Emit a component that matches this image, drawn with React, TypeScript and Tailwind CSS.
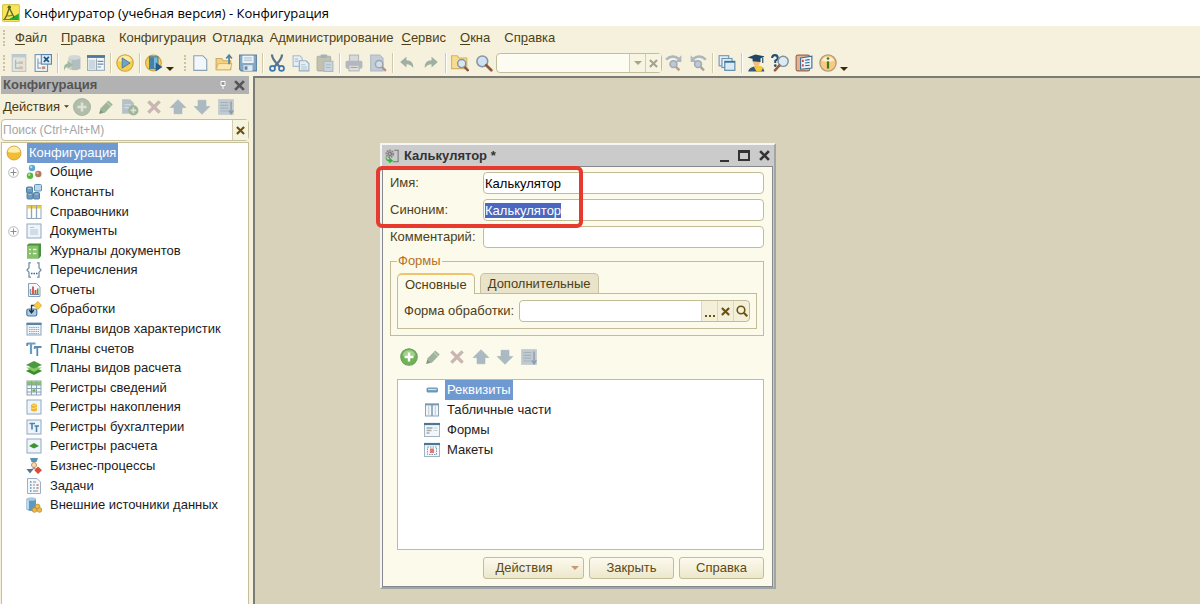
import { useEffect, useRef, useState } from "react";
import type { ReactNode } from "react";

const glass = (
  <>
    <circle cx="6.5" cy="6.5" r="4.8" fill="#cfe2f3" stroke="#8795a6" strokeWidth="1.4" />
    <path d="M10 10l4.5 4.5" stroke="#8b5a3c" strokeWidth="2.4" strokeLinecap="round" />
  </>
);

const page = <path d="M2.5 1.5h8l3.500 3.500v9.500h-11.500z" fill="#f2f7fb" stroke="#8aa0b5" />;

const frame = <rect x="1" y="1" width="14" height="14" fill="#eef4f9" stroke="#8fa9bf" />;

const icons: Record<string, ReactNode> = {
  logo: (
    <>
      <rect x="0.500" y="0.500" width="15" height="15" rx="1" fill="#f8e45c" stroke="#dcc64c" />
      <path d="M6 13.500l9-5v5z" fill="#1fae35" />
      <path d="M6.500 3.500L4 10.500l-2 3.500M6.500 3.500l4.500 9" fill="none" stroke="#55651a" strokeWidth="1.200" />
      <path d="M3.500 10q3 1.500 6-.5M1 13.800h14" fill="none" stroke="#6f8020" />
      <circle cx="6.500" cy="2.800" r="1.500" fill="#55651a" />
    </>
  ),
  tree: (
    <g opacity="0.55">
      <rect x="2" y="0.500" width="12" height="15" fill="#d3dbe1" stroke="#91a5b8" />
      <rect x="2" y="0.500" width="12" height="2.500" fill="#8ea9c1" />
      <path d="M5 5v7.500h3M5 8h3" fill="none" stroke="#6d8296" />
      <rect x="8" y="6.500" width="3.500" height="2.500" fill="#c98f79" />
      <rect x="8" y="11" width="3.500" height="2.500" fill="#c98f79" />
    </g>
  ),
  treeClose: (
    <>
      <rect x="1" y="0.500" width="11" height="15" fill="#f2f7fb" stroke="#7c97b0" />
      <path d="M3.500 4v8.500h3M3.500 8h3" fill="none" stroke="#8b9cac" />
      <rect x="7" y="11" width="3" height="2.500" fill="#c98f79" />
      <rect x="6.500" y="0.500" width="9" height="8.500" fill="#dcebf7" stroke="#5b88aa" />
      <path d="M8.800 2.500l4.400 4.500m0-4.500l-4.400 4.500" stroke="#1d5480" strokeWidth="1.500" />
    </>
  ),
  database: (
    <g opacity="0.75">
      <path d="M5 3v10q5 3 10.500 0V3z" fill="#9dadb9" />
      <path d="M6.500 5v9" stroke="#c3ced6" strokeWidth="2" />
      <ellipse cx="10.200" cy="3" rx="5.200" ry="2.200" fill="#c5d0d8" />
      <path d="M1 15q-1-6 3-6.500V6l5 3.500-5 3.500v-1.500Q1.500 12 1 15z" fill="#8aa490" />
    </g>
  ),
  formWindow: (
    <>
      <rect x="0.500" y="1.500" width="15" height="13" fill="#f5f8fa" stroke="#9aabba" />
      <path d="M0 1h16v2.500H0z" fill="#4f7a9c" />
      <path d="M1.500 5h6v8.500h-6z" fill="#cbd6de" />
      <path d="M9.500 6.500h5M9.500 9h5M9.500 11.500h3" stroke="#6d8ba3" />
      <path d="M8.500 4v10.500" stroke="#9aabba" />
    </>
  ),
  play: (
    <>
      <circle cx="8" cy="8" r="7.300" fill="#f8cf4d" stroke="#cfa340" />
      <path d="M1.800 6a6.500 6.500 0 0112.400 0q-6 3-12.400 0z" fill="#fdebA5" />
      <path d="M5.500 3.500l7 4.500-7 4.500z" fill="#6fa3ca" stroke="#44769d" strokeWidth="0.800" />
    </>
  ),
  debug: (
    <>
      <circle cx="7.500" cy="8" r="7" fill="#f8cf4d" stroke="#cfa340" />
      <rect x="4" y="2.500" width="7.500" height="10.500" fill="#74bcdc" stroke="#4c7c9f" />
      <path d="M4.500 3h3.500v9.500H4.500z" fill="#487fa6" />
      <path d="M9.500 7.500l6 4-6 4z" fill="#285c8a" />
    </>
  ),
  newDoc: page,
  open: (
    <>
      <path d="M1 14V4h5l1.500 2H14v8z" fill="#f1d182" stroke="#d0ab5c" />
      <path d="M1 14l2-5.500h12L13.500 14z" fill="#fbe8b2" stroke="#d0ab5c" strokeWidth="0.700" />
      <path d="M12.500 9V2M10 4l2.500-3L15 4" fill="none" stroke="#4f82a4" strokeWidth="1.500" />
    </>
  ),
  save: (
    <>
      <path d="M0.500 1h15v14H2l-1.500-1.500z" fill="#86a8c3" stroke="#5f86a5" />
      <rect x="3" y="1.500" width="10" height="6.500" fill="#eaf1f7" />
      <path d="M4.500 3.500h7M4.500 5.500h7" stroke="#a9bccc" />
      <rect x="4" y="10" width="8" height="5" fill="#e3eaf0" />
      <rect x="5" y="11" width="2.500" height="3" fill="#5f86a5" />
    </>
  ),
  cut: (
    <>
      <path d="M3.500 0.500q0 4 6.500 10.500M12.500 0.500q0 4-6.500 10.500" fill="none" stroke="#5a7388" strokeWidth="2" />
      <circle cx="4" cy="12.800" r="2.200" fill="none" stroke="#3a77ac" strokeWidth="1.500" />
      <circle cx="12" cy="12.800" r="2.200" fill="none" stroke="#3a77ac" strokeWidth="1.500" />
    </>
  ),
  copy: (
    <>
      <path d="M1 1.500h6l2 2V11H1z" fill="#e6eef5" stroke="#a9bdcd" />
      <path d="M6.500 6h6l2.500 2.500v6.500H6.500z" fill="#e6eef5" stroke="#94adc1" />
      <path d="M8 9.500h4M8 11.500h5.500M8 13.300h5.500M2.500 4.500h3M2.500 6.500h3" stroke="#b0c3d2" />
    </>
  ),
  paste: (
    <>
      <rect x="1" y="2" width="12" height="13" rx="1" fill="#c2c0ae" stroke="#b3b1a0" />
      <rect x="4" y="0.500" width="6" height="3" rx="1" fill="#a3b1bb" />
      <rect x="7" y="6.500" width="8" height="9" fill="#c9d5de" stroke="#a9bac7" />
      <path d="M9 9.500h4M9 12h4" stroke="#a9bac7" />
    </>
  ),
  print: (
    <>
      <rect x="4" y="1" width="8" height="6" fill="#d5dadd" stroke="#b3b8bc" />
      <rect x="0.500" y="6" width="15" height="7" rx="1.500" fill="#b2b8be" />
      <rect x="3.500" y="10" width="9" height="5" fill="#e0dfdb" stroke="#b3b8bc" />
      <path d="M5 12h6" stroke="#b99d95" />
    </>
  ),
  preview: (
    <>
      <path d="M1.500 1h8l3 3v11h-11z" fill="#c3cdd6" stroke="#b0bcc8" />
      <circle cx="9" cy="9" r="3.300" fill="#d3dde5" stroke="#9aa8b5" strokeWidth="1.300" />
      <path d="M11.500 11.500l3.500 3.500" stroke="#b09287" strokeWidth="2" />
    </>
  ),
  undo: <path d="M2 7l5.500-4.500V5.500q6.500 0 6 7Q11.500 9 7.500 9v3z" fill="#9db0a1" />,
  redo: <path d="M14 7L8.500 2.500V5.500q-6.500 0-6 7Q4.500 9 8.500 9v3z" fill="#9db0a1" />,
  findFiles: (
    <>
      <path d="M0.500 13V1.500h5L7 3.500h7V13z" fill="#f7dc8d" stroke="#d6b466" />
      <circle cx="9.500" cy="8.500" r="3.600" fill="#d6e6f2" stroke="#8795a6" strokeWidth="1.300" />
      <path d="M12 11.500l3.500 3.500" stroke="#8b5a3c" strokeWidth="2.200" />
    </>
  ),
  find: glass,
  findNext: (
    <>
      <path d="M1 5q5-5 11-1" fill="none" stroke="#a9b7bf" strokeWidth="2" />
      <path d="M14.500 1v6H9z" fill="#a9b7bf" />
      <circle cx="7.500" cy="9" r="3" fill="#bccad8" stroke="#a3abb7" strokeWidth="1.500" />
      <path d="M9.800 11.500l3 3" stroke="#b5a096" strokeWidth="2.200" />
    </>
  ),
  findPrev: (
    <>
      <path d="M15 5Q10 0 4 4" fill="none" stroke="#a9b7bf" strokeWidth="2" />
      <path d="M1.500 1v6H7z" fill="#a9b7bf" />
      <circle cx="8" cy="9" r="3" fill="#bccad8" stroke="#a3abb7" strokeWidth="1.500" />
      <path d="M10.300 11.500l3 3" stroke="#b5a096" strokeWidth="2.200" />
    </>
  ),
  windows: (
    <>
      <rect x="1" y="1.500" width="8.500" height="9" fill="#e6f0f7" stroke="#7397b3" />
      <rect x="3.500" y="4" width="9" height="8" fill="#e6f0f7" stroke="#6d94b0" />
      <rect x="6" y="6.500" width="9" height="8" fill="#d9eaf5" stroke="#5787a8" />
      <path d="M6 7h9" stroke="#3a7196" strokeWidth="1.500" />
    </>
  ),
  graduate: (
    <>
      <path d="M5 5q0 5 3.500 6Q12 10 12 5z" fill="#f3bd8a" />
      <path d="M1 15.500q1-4 6-4.500l7 .5 1.500 4z" fill="#35587a" />
      <path d="M6 11l2.500 4.500h4L14.500 12l-3-1.500z" fill="#f4c839" />
      <path d="M0.500 3l7-2.500L15.500 2 9.500 5.500z" fill="#1f4664" />
      <path d="M5 4.500v2l7 .5V4.500z" fill="#1f4664" />
      <path d="M14 3v5" stroke="#1f4664" />
    </>
  ),
  helpSearch: (
    <>
      <path d="M1 3.500Q1 1 3.500 1T6 3.500Q6 5 3.800 6v2" fill="none" stroke="#204f75" strokeWidth="1.800" />
      <circle cx="3.800" cy="10.300" r="1.200" fill="#204f75" />
      <circle cx="10.800" cy="6.500" r="4.500" fill="#dceaf4" stroke="#8290a0" strokeWidth="1.300" />
      <path d="M7.500 10.200L3.500 14.500" stroke="#94603f" strokeWidth="2.300" strokeLinecap="round" />
    </>
  ),
  book: (
    <>
      <rect x="1" y="1" width="12" height="14" rx="1.500" fill="#e0b394" stroke="#9a6a50" />
      <path d="M5 3.500L15 2v10.500L5 13.500z" fill="#edf5fb" stroke="#3b6c93" />
      <path d="M9 5.500l4-.5M9 8l4-.5M9 10.500l4-.5" stroke="#2e5f88" />
      <path d="M7 5v2M7 9v2" stroke="#c7452f" strokeWidth="1.500" />
    </>
  ),
  info: (
    <>
      <circle cx="8" cy="8" r="7.200" fill="#f9cb80" stroke="#b39b80" strokeWidth="1.200" />
      <path d="M2.500 6a6 6 0 0111 0q-5.500 2-11 0z" fill="#fff0cf" />
      <circle cx="8" cy="4" r="1.200" fill="#3d7a2a" />
      <path d="M8 6.500v6.500" stroke="#3d7a2a" strokeWidth="2" />
    </>
  ),
  add: (
    <>
      <circle cx="8" cy="8" r="7.300" fill="#6fb453" stroke="#6a9b63" />
      <path d="M2.200 6.500a6 6 0 0111.600 0q-6 2.500-11.600 0z" fill="#a4cf8c" />
      <path d="M8 4v8M4 8h8" stroke="#fff" strokeWidth="2.200" />
    </>
  ),
  addOff: (
    <>
      <circle cx="8" cy="8" r="7.500" fill="#b1bfaa" stroke="#a9b4a5" />
      <path d="M8 4v8M4 8h8" stroke="#dfe3d4" strokeWidth="2.200" />
    </>
  ),
  pencil: (
    <>
      <path d="M2 14l1.200-5L10 2.200l4 3.600L7 13z" fill="#9fb49b" />
      <path d="M8.500 3.500l4 4" stroke="#c3cfbb" />
      <path d="M2 14l1-3.500L5.500 13z" fill="#7f9484" />
    </>
  ),
  addCopy: (
    <>
      <path d="M1 1h7l3.500 3.500V14H1z" fill="#b5c1c8" />
      <path d="M3 6h6M3 8.500h4" stroke="#d5dcdc" />
      <circle cx="11" cy="11" r="4.500" fill="#a0b49a" />
      <path d="M11 8.500v5M8.500 11h5" stroke="#dde3d3" strokeWidth="1.500" />
    </>
  ),
  remove: <path d="M3 3l10 10M13 3L3 13" stroke="#c9b5b1" strokeWidth="3" />,
  up: <path d="M8 1.500L15 8.500h-3.500V14h-7V8.500H1z" fill="#abb9c2" stroke="#a0b0bb" strokeWidth="0.500" />,
  down: <path d="M8 14.500L15 7.500h-3.500V2h-7v5.500H1z" fill="#abb9c2" stroke="#a0b0bb" strokeWidth="0.500" />,
  sort: (
    <>
      <rect x="1" y="1" width="14" height="14" fill="#c0cad0" />
      <path d="M3 4h7M3 6.500h7M3 9h7M3 11.500h7" stroke="#a3b3bd" />
      <path d="M12.500 3v10M10.500 11l2 3 2-3" fill="none" stroke="#8b9ba7" strokeWidth="1.200" />
    </>
  ),
  config: (
    <>
      <circle cx="8" cy="8" r="7" fill="#f2bd35" stroke="#cb9a2c" strokeWidth="0.800" />
      <path d="M2 7a6 5.500 0 0112 0q-6 1.500-12 0z" fill="#fdeeb0" />
    </>
  ),
  common: (
    <>
      <circle cx="6" cy="4" r="3.200" fill="#5ba6d0" />
      <circle cx="4" cy="11.800" r="3.200" fill="#55b83c" />
      <circle cx="12.300" cy="10" r="3.200" fill="#b07a5c" />
      <circle cx="5.200" cy="3" r="1.200" fill="#b5dcef" />
      <circle cx="3.200" cy="10.800" r="1.200" fill="#b5e8a2" />
      <circle cx="11.500" cy="9" r="1.200" fill="#dcb79f" />
    </>
  ),
  constants: (
    <>
      <rect x="8.500" y="0.500" width="7" height="6.500" rx="1" fill="#bcd9ec" stroke="#6492b4" />
      <rect x="0.500" y="3" width="6" height="6" rx="1" fill="#6f9bbc" stroke="#5381a3" />
      <rect x="1" y="9" width="6" height="6" rx="1" fill="#6f9bbc" stroke="#5381a3" />
      <rect x="7.500" y="8.500" width="6" height="6.500" rx="1" fill="#6f9bbc" stroke="#5381a3" />
      <path d="M2 4.500h3M2.500 10.500h3M9 10h3" stroke="#a7cbe4" />
    </>
  ),
  catalog: (
    <>
      <rect x="1" y="1.500" width="14" height="13" fill="#fff" stroke="#8fa6b9" />
      <path d="M1 1.500h14v3H1z" fill="#f1cb3b" />
      <path d="M5.500 1.500v13M10.500 1.500v13" stroke="#8fa6b9" strokeWidth="1.300" />
    </>
  ),
  document: (
    <>
      {frame}
      <path d="M4 4.500h4M4 7h8M4 9h8M4 11h8" stroke="#b2c6d6" />
    </>
  ),
  journal: (
    <>
      <path d="M1 2l2-1.500h12v12.500l-2 2.500H1z" fill="#4b9140" />
      <rect x="1" y="2.500" width="11.500" height="12.500" fill="#86c168" />
      <path d="M3 6.500h2M7 6.500h3.500M3 10.500h2M7 10.500h3.500" stroke="#eaf7dd" strokeWidth="1.500" />
    </>
  ),
  braces: (
    <>
      <path d="M5 .8H3v5L1 8l2 2.200v5h2M11 .8h2v5L15 8l-2 2.200v5h-2" fill="none" stroke="#7391aa" strokeWidth="1.300" />
      <path d="M5 11.500h1.500M7.500 11.500H9M10 11.500h1.500" stroke="#3e6482" strokeWidth="1.500" />
    </>
  ),
  report: (
    <>
      {page}
      <path d="M4.500 12V7" stroke="#7799b2" strokeWidth="1.500" />
      <path d="M7 12V4.500M9.500 12V8" stroke="#d84d3d" strokeWidth="1.800" />
      <path d="M11.700 12V6.500" stroke="#48a33c" strokeWidth="1.500" />
      <path d="M4 12.500h9" stroke="#708ba1" />
    </>
  ),
  processing: (
    <>
      <rect x="0.800" y="8" width="10" height="7" rx="1.800" fill="#a8cde8" stroke="#4f7da1" strokeWidth="1.200" />
      <path d="M9 4.500H5.500V11M3.300 9l2.200 3 2.200-3" fill="none" stroke="#28343d" strokeWidth="1.300" />
      <path d="M11.800.5l4 4-4 4-4-4z" fill="#f7cc42" stroke="#c39b2e" strokeWidth="0.700" />
    </>
  ),
  kinds: (
    <>
      <rect x="1" y="2" width="14" height="12" fill="#eef3f7" stroke="#8ba4b8" />
      <path d="M0.500 3h15" stroke="#5c84a3" strokeWidth="2" />
      <path d="M3 6.500h10M3 8.500h10M3 10.500h10M3 12.500h10" stroke="#94acbf" strokeDasharray="1.500 0.700" />
    </>
  ),
  accounts: (
    <>
      <path d="M1 2.500h8.500M5 2.500v10.500" stroke="#6c9dc2" strokeWidth="2.200" />
      <path d="M8 6h7.500M11.300 6v9M1.200 2v3M8.700 6v2" stroke="#5a8bb2" strokeWidth="1.800" />
    </>
  ),
  calcKinds: (
    <>
      <path d="M0 11l4-2.200h8l4 2.200-8 4z" fill="#3c8a3a" />
      <path d="M0 7.500h4V5.500h8v2h4L8 12z" fill="#86c860" />
      <path d="M0 5l8-4 8 4-8 3.500z" fill="#4a9a40" />
    </>
  ),
  infoReg: (
    <>
      <rect x="1" y="1" width="14" height="14" fill="#f3f7fa" stroke="#8aa2b6" />
      <path d="M1 1.500h14v3.500H1z" fill="#85c35e" />
      <path d="M5.500 1v14M10.500 1v14M1 5h14M1 8.500h14M1 12h14" stroke="#8aa2b6" />
      <path d="M6.500 9.500h3v2h-3z" fill="#56a33f" />
    </>
  ),
  accumReg: (
    <>
      {frame}
      <path d="M5 5.500q3-2 6 0v6q-3 2-6 0z" fill="#eeb52c" />
      <path d="M4 8.500q3 2 7 0M5 5.500q3 2 6 0" fill="none" stroke="#fce38b" />
    </>
  ),
  bookReg: (
    <>
      {frame}
      <path d="M3.500 4.500h5.500M6 4.500v6M8.500 7h4.500M10.500 7v6" stroke="#4a83ae" strokeWidth="1.600" />
    </>
  ),
  calcReg: (
    <>
      {frame}
      <path d="M3 8l5-3 5 3-5 2.500z" fill="#3e9336" />
    </>
  ),
  process: (
    <>
      <path d="M4 0h8l-1.500 4h-5z" fill="#5593bd" />
      <circle cx="8" cy="7" r="2.500" fill="#f5ddba" stroke="#c58f57" />
      <path d="M8 9v2M3.500 12l4.500-1.500 4.500 1.500" fill="none" stroke="#8493a0" />
      <path d="M0.500 11h7L4 15.500z" fill="#55758c" />
      <path d="M12 8.500l4 3.700-4 3.700-3.700-3.700z" fill="#dc4d35" />
    </>
  ),
  tasks: (
    <>
      <path d="M1.500 0.500h9.500l3.500 3.500v11.500h-13z" fill="#f2f7fb" stroke="#9db0c1" />
      <path d="M4 4h1.500M4 7h1.500M4 10h1.500M4 13h1.500" stroke="#6387a3" strokeWidth="1.300" />
      <path d="M7 4h3M7 7h2M7 10h2M7 13h5" stroke="#9db2c3" strokeWidth="1.300" />
      <path d="M10.500 7h2M10.500 10h2" stroke="#d86859" strokeWidth="1.300" />
    </>
  ),
  external: (
    <>
      <path d="M0.500 2v10.500q5 3 9.500 0V2z" fill="#5e98c1" />
      <path d="M2 3v9.500" stroke="#bcdaed" strokeWidth="2" />
      <ellipse cx="5.300" cy="2" rx="4.800" ry="1.800" fill="#a4cbe4" />
      <circle cx="11.500" cy="9.500" r="2.400" fill="#edbb43" stroke="#b98a3c" strokeWidth="0.800" />
      <circle cx="8.500" cy="13" r="2.300" fill="#edbb43" stroke="#b98a3c" strokeWidth="0.800" />
      <circle cx="13.500" cy="13" r="2.300" fill="#edbb43" stroke="#b98a3c" strokeWidth="0.800" />
    </>
  ),
  attribute: (
    <>
      <rect x="2.500" y="5.500" width="11.500" height="5" rx="1.500" fill="#6c98b8" />
      <path d="M4 7.500h8.500" stroke="#d0e3f0" strokeWidth="1.300" />
    </>
  ),
  tabular: (
    <>
      <rect x="1.500" y="2" width="13" height="12" fill="#f3f7fa" stroke="#8ba3b7" />
      <path d="M1 2.500h14" stroke="#7a98b0" strokeWidth="1.800" />
      <path d="M8 2v12" stroke="#7a98b0" strokeWidth="1.500" />
      <path d="M4.700 4v10M11.300 4v10" stroke="#bccbd7" />
    </>
  ),
  form: (
    <>
      <rect x="0.500" y="1.500" width="15" height="13" fill="#f3f7fa" stroke="#9fb3c4" />
      <path d="M0 2h16" stroke="#4b7898" strokeWidth="2.200" />
      <path d="M2.500 6h6M2.500 8.500h5M2.500 11h3" stroke="#a3a9ab" strokeWidth="1.500" />
      <path d="M9.500 6h4M9.500 8.500h4" stroke="#c3ced6" strokeWidth="1.200" />
    </>
  ),
  template: (
    <>
      <rect x="0.500" y="1.500" width="15" height="13" fill="#f3f7fa" stroke="#9fb3c4" />
      <path d="M0 2h16" stroke="#4b7898" strokeWidth="2.200" />
      <rect x="3.500" y="5" width="9" height="7.500" fill="none" stroke="#8298a9" strokeDasharray="1.500 1" />
      <rect x="6" y="6.500" width="4" height="4.500" fill="#e37a70" />
    </>
  ),
  dataProcessor: (
    <>
      <path d="M10.500 1.500h4.500v13H9" fill="none" stroke="#777" strokeWidth="1.200" />
      <circle cx="5.500" cy="5.500" r="3.800" fill="none" stroke="#8b8b8b" strokeWidth="2.400" strokeDasharray="2 .8" />
      <circle cx="5.500" cy="5.500" r="2" fill="#aaa" stroke="#666" />
      <path d="M1 9q0 3.500 4 3.500V10l4 3.500-4 2.500V14Q1 14 1 9z" fill="#26b32e" stroke="#26b32e" strokeWidth="0.500" />
    </>
  ),
};

function Icon({ name, className = "size-4" }: { name: string; className?: string }) {
  return (
    <svg viewBox="0 0 16 16" className={className + " shrink-0"} aria-hidden="true">
      {icons[name]}
    </svg>
  );
}

function Cross({ className }: { className: string }) {
  return (
    <svg viewBox="0 0 10 10" className={className} fill="none" stroke="currentColor" strokeWidth="2.400" aria-hidden="true">
      <path d="M1 1l8 8M9 1L1 9" />
    </svg>
  );
}

function Caret({ className }: { className: string }) {
  return (
    <svg viewBox="0 0 8 4" className={className} fill="currentColor" aria-hidden="true">
      <path d="M0 0h8L4 4z" />
    </svg>
  );
}

function Grip() {
  return <span className="mr-px h-4 w-[3px] border-l-2 border-dotted border-[#c9c3a0]" />;
}

function Separator() {
  return (
    <span className="flex w-[5px] justify-center">
      <span className="h-5 w-[2px] border-l border-[#cfcaab] bg-white" />
    </span>
  );
}

function Tool({ name, label }: { name: string; label: string }) {
  return (
    <button type="button" aria-label={label} className="flex size-6 shrink-0 items-center justify-center">
      <Icon name={name} className="size-[18px]" />
    </button>
  );
}

function MenuItem({ text, hot = -1 }: { text: string; hot?: number }) {
  return (
    <button type="button">
      {hot < 0 ? text : <>{text.slice(0, hot)}<u className="underline-offset-2">{text[hot]}</u>{text.slice(hot + 1)}</>}
    </button>
  );
}

function MenuBar() {
  return (
    <nav className="flex h-6 items-center pl-[3px] text-[#4d4018]">
      <Grip />
      <div className="ml-2 flex gap-[14px]">
        <MenuItem text="Файл" hot={0} />
        <MenuItem text="Правка" hot={0} />
        <MenuItem text="Конфигурация" />
      </div>
      <div className="ml-1.5 flex gap-1.5">
        <MenuItem text="Отладка" />
        <MenuItem text="Администрирование" />
      </div>
      <div className="ml-2 flex gap-[14px]">
        <MenuItem text="Сервис" hot={0} />
        <MenuItem text="Окна" hot={0} />
        <MenuItem text="Справка" hot={2} />
      </div>
    </nav>
  );
}

function Toolbar() {
  return (
    <div className="flex h-[26px] items-center pl-[3px]">
      <Grip />
      <Tool name="tree" label="Открыть конфигурацию" />
      <Tool name="treeClose" label="Закрыть конфигурацию" />
      <Separator />
      <Tool name="database" label="Обновить конфигурацию базы данных" />
      <Tool name="formWindow" label="Окно конфигурации" />
      <Separator />
      <Tool name="play" label="Начать отладку" />
      <Separator />
      <Tool name="debug" label="Запуск" />
      <button type="button" aria-label="Ещё" className="flex h-6 w-[18px] items-end pb-1 text-[#3a2c08]"><Caret className="h-1 w-2" /></button>
      <Grip />
      <Tool name="newDoc" label="Новый" />
      <Tool name="open" label="Открыть" />
      <Tool name="save" label="Сохранить" />
      <Separator />
      <Tool name="cut" label="Вырезать" />
      <Tool name="copy" label="Копировать" />
      <Tool name="paste" label="Вставить" />
      <Separator />
      <Tool name="print" label="Печать" />
      <Tool name="preview" label="Просмотр" />
      <Separator />
      <Tool name="undo" label="Отменить" />
      <Tool name="redo" label="Вернуть" />
      <Separator />
      <Tool name="findFiles" label="Глобальный поиск" />
      <Tool name="find" label="Найти" />
      <div className="flex h-5 w-[166px] shrink-0 items-center rounded-sm border border-[#c3bd9b] bg-[#fdfcf2]">
        <input aria-label="Строка поиска" className="h-full min-w-0 grow px-1 outline-none" />
        <button type="button" aria-label="Список" className="flex h-full w-4 shrink-0 items-center justify-center border-l border-[#d3ceb2] bg-[#f7f4e1] text-[#a7a38c]"><Caret className="h-1 w-2" /></button>
        <button type="button" aria-label="Очистить" className="flex h-full w-4 shrink-0 items-center justify-center border-l border-[#d3ceb2] bg-[#f7f4e1] text-[#a7a38c]"><Cross className="size-[9px]" /></button>
      </div>
      <Tool name="findNext" label="Найти далее" />
      <Tool name="findPrev" label="Найти назад" />
      <Separator />
      <Tool name="windows" label="Окна" />
      <Separator />
      <Tool name="graduate" label="Обучение" />
      <Tool name="helpSearch" label="Поиск в справке" />
      <Tool name="book" label="Содержание справки" />
      <Tool name="info" label="О программе" />
      <button type="button" aria-label="Ещё" className="flex h-6 w-[18px] items-end pb-1 text-[#3a2c08]"><Caret className="h-1 w-2" /></button>
    </div>
  );
}

const treeItems = [
  { icon: "common", text: "Общие", expandable: true },
  { icon: "constants", text: "Константы" },
  { icon: "catalog", text: "Справочники" },
  { icon: "document", text: "Документы", expandable: true },
  { icon: "journal", text: "Журналы документов" },
  { icon: "braces", text: "Перечисления" },
  { icon: "report", text: "Отчеты" },
  { icon: "processing", text: "Обработки" },
  { icon: "kinds", text: "Планы видов характеристик" },
  { icon: "accounts", text: "Планы счетов" },
  { icon: "calcKinds", text: "Планы видов расчета" },
  { icon: "infoReg", text: "Регистры сведений" },
  { icon: "accumReg", text: "Регистры накопления" },
  { icon: "bookReg", text: "Регистры бухгалтерии" },
  { icon: "calcReg", text: "Регистры расчета" },
  { icon: "process", text: "Бизнес-процессы" },
  { icon: "tasks", text: "Задачи" },
  { icon: "external", text: "Внешние источники данных" },
];

function ConfigPanel() {
  return (
    <aside className="flex w-[249px] shrink-0 flex-col pl-px">
      <header className="flex h-[18px] items-center bg-[#b2b2b2] pr-1 pl-[2px] text-[#555]">
        <h2 className="grow font-bold">Конфигурация</h2>
        <button type="button" aria-label="Закрепить" className="mr-2">
          <svg viewBox="0 0 6 8" className="h-2 w-1.5" aria-hidden="true">
            <path d="M1 .5h4v4H1zM3 5v3" fill="#999" stroke="#fff" />
          </svg>
        </button>
        <button type="button" aria-label="Закрыть панель"><Cross className="size-[11px]" /></button>
      </header>
      <div className="flex h-[25px] items-center">
        <button type="button" className="mr-px flex items-center gap-1 pl-[2px] text-[#4d3a10]">
          Действия <Caret className="h-[3px] w-[5px]" />
        </button>
        <Tool name="addOff" label="Добавить" />
        <Tool name="pencil" label="Изменить" />
        <Tool name="addCopy" label="Добавить копированием" />
        <Tool name="remove" label="Удалить" />
        <Tool name="up" label="Вверх" />
        <Tool name="down" label="Вниз" />
        <Tool name="sort" label="Упорядочить" />
      </div>
      <div className="flex h-[22px] rounded-sm border border-[#c5bf9c] bg-white">
        <input aria-label="Поиск" placeholder="Поиск (Ctrl+Alt+M)" className="min-w-0 grow px-px text-xs outline-none placeholder:text-[#a5a5a5]" />
        <button type="button" aria-label="Очистить поиск" className="flex w-4 items-center justify-center border-l border-[#d3ceb2] bg-[#f6f3df] text-[#6b5312]"><Cross className="size-[9px]" /></button>
      </div>
      <div className="mt-px grow border border-b-0 border-[#c5bf9c] bg-white">
        <ul className="grid h-[372px] auto-rows-fr text-[#1c1c1c]">
          <li className="flex items-center gap-[5px] pl-1">
            <Icon name="config" />
            <span className="flex h-full items-center bg-[#6f99d1] px-[2px] text-white">Конфигурация</span>
          </li>
          {treeItems.map((item) => (
            <li key={item.text} className="flex items-center pl-1.5">
              <span className="w-[18px]">
                {item.expandable && (
                  <button type="button" aria-label={"Развернуть " + item.text} className="flex">
                    <svg viewBox="0 0 11 11" className="size-[11px]" fill="none" stroke="#8c8c8c" aria-hidden="true">
                      <circle cx="5.500" cy="5.500" r="4.800" stroke="#b5b5b5" />
                      <path d="M5.500 2.500v6M2.500 5.500h6" />
                    </svg>
                  </button>
                )}
              </span>
              <Icon name={item.icon} />
              <span className="ml-2">{item.text}</span>
            </li>
          ))}
        </ul>
      </div>
    </aside>
  );
}

const field = "h-[22px] min-w-0 grow rounded-sm border border-[#c2bc98] bg-white px-px text-black outline-none";
const action = "flex h-[22px] items-center justify-center rounded-[3px] border border-[#c2bc98] bg-linear-to-b from-[#fcfaee] to-[#ece7cc] text-[#5c4a17]";

function CalculatorWindow() {
  const [name, setName] = useState("Калькулятор");
  const [synonym, setSynonym] = useState("Калькулятор");
  const synonymRef = useRef<HTMLInputElement>(null);

  useEffect(() => {
    synonymRef.current?.focus();
    synonymRef.current?.select();
  }, []);

  return (
    <section className="absolute top-[65px] left-[125px] w-[396px] border-2 border-t-[#f5f5f5] border-r-[#a2a5a8] border-b-[#a2a5a8] border-l-[#f5f5f5] bg-[#cbcbcb] pr-px">
      <header className="flex h-[21px] items-center gap-[5px] px-[3px] text-[#333]">
        <Icon name="dataProcessor" className="size-[14px]" />
        <h2 className="grow font-bold">Калькулятор *</h2>
        <button type="button" aria-label="Свернуть" className="flex h-3 w-[9px] items-end"><span className="h-[2px] w-full bg-[#333]" /></button>
        <button type="button" aria-label="Развернуть" className="mx-1 h-[11px] w-3 border-2 border-t-[3px] border-[#333]" />
        <button type="button" aria-label="Закрыть окно"><Cross className="size-[11px]" /></button>
      </header>
      <div className="border border-[#85898c] bg-[#fcfaeb] pt-[5px] pr-2 pb-[7px] pl-[7px] text-[#4d4018]">
        <div className="flex flex-col gap-[5px]">
          <div className="flex items-center">
            <label htmlFor="name" className="w-[93px]">Имя:</label>
            <input id="name" value={name} onChange={(e) => setName(e.target.value)} className={field} />
          </div>
          <div className="flex items-center">
            <label htmlFor="synonym" className="w-[93px]">Синоним:</label>
            <input id="synonym" ref={synonymRef} value={synonym} onChange={(e) => setSynonym(e.target.value)} className={field + " selection:bg-[#4a68bf] selection:text-white"} />
          </div>
          <div className="flex items-center">
            <label htmlFor="comment" className="w-[93px]">Комментарий:</label>
            <input id="comment" className={field} />
          </div>
        </div>

        <fieldset className="mt-[5px] border border-[#c2bc98] px-1.5 pb-1.5">
          <legend className="px-px leading-4 text-[#b5711c]">Формы</legend>
          <div role="tablist" className="relative flex gap-[5px] pt-1">
            <button type="button" role="tab" aria-selected="true" className="-mb-px h-[21px] rounded-t-[5px] border border-t-2 border-b-0 border-[#c2bc98] border-t-[#f0c56a] bg-[#fcfaeb] px-[7px]">Основные</button>
            <button type="button" role="tab" aria-selected="false" className="h-5 rounded-t-[5px] border border-b-0 border-[#c8c2a0] bg-[#e9e3c9] px-[7px]">Дополнительные</button>
          </div>
          <div className="flex items-center border border-[#c2bc98] p-1.5">
            <label htmlFor="form" className="w-[115px] shrink-0">Форма обработки:</label>
            <div className="flex h-[22px] min-w-0 grow rounded-sm border border-[#c2bc98] bg-[#f3efd9] text-[#6b5312]">
              <input id="form" className="min-w-0 grow rounded-l-sm bg-white px-[2px] text-black outline-none" />
              <button type="button" aria-label="Выбрать" className="flex w-4 items-end justify-center gap-[2px] border-l border-[#ddd7bb] pb-1">
                <span className="size-[2px] bg-current" />
                <span className="size-[2px] bg-current" />
                <span className="size-[2px] bg-current" />
              </button>
              <button type="button" aria-label="Очистить" className="flex w-4 items-center justify-center border-l border-[#ddd7bb]"><Cross className="size-[9px]" /></button>
              <button type="button" aria-label="Открыть" className="flex w-4 items-center justify-center border-l border-[#ddd7bb]">
                <svg viewBox="0 0 12 12" className="size-3" fill="none" stroke="currentColor" strokeWidth="1.600" aria-hidden="true">
                  <circle cx="5" cy="5" r="3.800" />
                  <path d="M7.800 7.800l3.500 3.500" strokeWidth="2.200" />
                </svg>
              </button>
            </div>
          </div>
        </fieldset>

        <div className="mt-[9px] flex pl-[7px]">
          <Tool name="add" label="Добавить" />
          <Tool name="pencil" label="Изменить" />
          <Tool name="remove" label="Удалить" />
          <Tool name="up" label="Вверх" />
          <Tool name="down" label="Вниз" />
          <Tool name="sort" label="Упорядочить" />
        </div>

        <ul className="mt-[10px] ml-[7px] min-h-[171px] border border-[#c2bc98] bg-white pl-[26px] text-[#1c1c1c]">
          {[["attribute", "Реквизиты"], ["tabular", "Табличные части"], ["form", "Формы"], ["template", "Макеты"]].map(([icon, text], i) => (
            <li key={text} className="flex h-5 items-center gap-[5px]">
              <Icon name={icon} />
              <span className={i === 0 ? "flex h-full items-center bg-[#6f99d1] px-[2px] text-white" : "px-[2px]"}>{text}</span>
            </li>
          ))}
        </ul>

        <div className="mt-[7px] flex justify-end gap-[5px]">
          <button type="button" className={action + " w-[101px] gap-[19px] pl-[8px]"}>Действия <Caret className="h-1 w-2 text-[#c19a78]" /></button>
          <button type="button" className={action + " w-[85px]"}>Закрыть</button>
          <button type="button" className={action + " w-[85px]"}>Справка</button>
        </div>
      </div>
      {/* callout around the name fields */}
      <div className="pointer-events-none absolute top-[21px] -left-[6px] h-[62px] w-[207px] rounded-md border-4 border-[#e63a2e]" />
    </section>
  );
}

export default function App() {
  return (
    <div className="flex min-h-screen flex-col bg-[#f5f1dc] font-['Liberation_Sans',Arial,sans-serif] text-[13px] leading-4">
      <header className="flex h-[26px] items-center gap-1 bg-white pl-[2px] text-black">
        <Icon name="logo" className="size-[18px]" />
        <h1 className="font-['Open_Sans','Noto_Sans',sans-serif]">Конфигуратор (учебная версия) - Конфигурация</h1>
      </header>
      <MenuBar />
      <Toolbar />
      <div className="flex grow gap-1">
        <ConfigPanel />
        <main className="relative grow overflow-hidden border-t-2 border-l-2 border-[#7c7c76] bg-[#d9d2bb]">
          <CalculatorWindow />
        </main>
      </div>
    </div>
  );
}
